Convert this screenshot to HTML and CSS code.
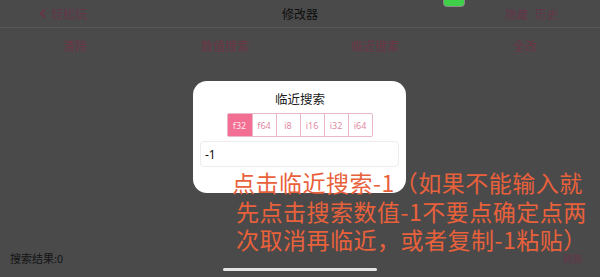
FILE: index.html
```html
<!DOCTYPE html>
<html lang="zh">
<head>
<meta charset="utf-8">
<link rel="stylesheet" href="styles.css">
</head>
<body>
<div class="app">
  <div class="pill"></div>
  <header class="nav">
    <div class="nav-left"><span class="chev"></span>轻松玩</div>
    <div class="nav-title">修改器</div>
    <div class="nav-right"><span>隐藏</span><span>历史</span></div>
  </header>
  <div class="tabs">
    <span>清除</span><span>数值搜索</span><span>临近搜索</span><span>全改</span>
  </div>
  <div class="spacer"></div>
  <div class="footer">
    <span class="result">搜索结果:0</span>
    <span class="refresh">刷新</span>
  </div>
  <div class="home-bar"></div>

  <div class="dialog">
    <div class="dialog-title">临近搜索</div>
    <div class="seg">
      <span class="on">f32</span><span>f64</span><span>i8</span><span>i16</span><span>i32</span><span>i64</span>
    </div>
    <div class="input">-1</div>
  </div>

  <div class="note">
    <div class="l1">点击临近搜索-1（如果不能输入就</div>
    <div class="l2">先点击搜索数值-1不要点确定点两</div>
    <div class="l2">次取消再临近，或者复制-1粘贴）</div>
  </div>
</div>
</body>
</html>
```
FILE: styles.css
```css
* { box-sizing: border-box; }
html, body { margin: 0; padding: 0; }
body {
  width: 600px;
  height: 277px;
  overflow: hidden;
  font-family: "Noto Sans CJK SC", "Noto Sans", sans-serif;
}
.app {
  position: relative;
  width: 600px;
  height: 277px;
  background: #4a4a4b;
  display: flex;
  flex-direction: column;
}
.pill {
  position: absolute;
  left: 443px;
  top: -6px;
  width: 22px;
  height: 13px;
  border-radius: 4px;
  background: #3fcf48;
  border: 1px solid #8a8a8a;
}
.nav {
  height: 28px;
  display: flex;
  align-items: center;
  padding: 0 42px 0 38px;
  border-bottom: 1px solid #565658;
  font-size: 12px;
  position: relative;
}
.nav-left {
  color: #653648;
  display: flex;
  align-items: center;
  flex: 1;
}
.chev {
  width: 7px;
  height: 7px;
  border-left: 2px solid #653648;
  border-bottom: 2px solid #653648;
  transform: rotate(45deg);
  margin: 0 3px 0 3px;
}
.nav-title {
  position: absolute;
  left: 0;
  right: 0;
  text-align: center;
  color: #0d0d0d;
  font-size: 12px;
  pointer-events: none;
}
.nav-right {
  color: #653648;
  display: flex;
  gap: 7px;
  font-size: 11.5px;
}
.tabs {
  display: grid;
  grid-template-columns: repeat(4, 1fr);
  height: 36px;
  align-items: center;
  text-align: center;
  font-size: 12px;
  color: #6c3645;
  padding-bottom: 1px;
}
.spacer { flex: 1; }
.footer {
  display: flex;
  justify-content: space-between;
  align-items: center;
  padding: 0 17px 0 10px;
  height: 16px;
  margin-bottom: 11px;
}
.result { font-size: 11px; color: #141414; }
.refresh { font-size: 10px; color: #653648; }
.home-bar {
  position: absolute;
  left: 223px;
  top: 268px;
  width: 154px;
  height: 3px;
  border-radius: 2px;
  background: #e4e4e4;
}
.dialog {
  position: absolute;
  left: 193px;
  top: 81px;
  width: 213px;
  height: 112px;
  background: #fff;
  border-radius: 14px;
  display: flex;
  flex-direction: column;
  align-items: center;
  padding: 9px 7px 0 7px;
}
.dialog-title {
  font-size: 12.5px;
  color: #1a1a1a;
  line-height: 18px;
  padding-left: 1px;
}
.seg {
  display: flex;
  margin-top: 5px;
  border: 1px solid #e8b8c6;
  border-radius: 2px;
}
.seg span {
  width: 24px;
  height: 22px;
  display: flex;
  align-items: center;
  justify-content: center;
  font-family: "Noto Sans", sans-serif;
  font-size: 9px;
  color: #e089a2;
  border-left: 1px solid #e8b8c6;
}
.seg span:first-child { border-left: none; }
.seg span.on {
  background: #f26f93;
  color: #ffe8ee;
}
.input {
  align-self: stretch;
  margin-top: 4px;
  height: 26px;
  border: 1px solid #ececec;
  border-radius: 4px;
  font-family: "Noto Sans", sans-serif;
  font-size: 12px;
  color: #111;
  display: flex;
  align-items: center;
  padding-left: 4px;
}
.note {
  position: absolute;
  left: 232px;
  top: 168px;
  color: #e8613b;
  font-size: 23px;
  line-height: 28.5px;
  letter-spacing: 0.5px;
  white-space: nowrap;
}
.note .l2 { padding-left: 4px; }
```
